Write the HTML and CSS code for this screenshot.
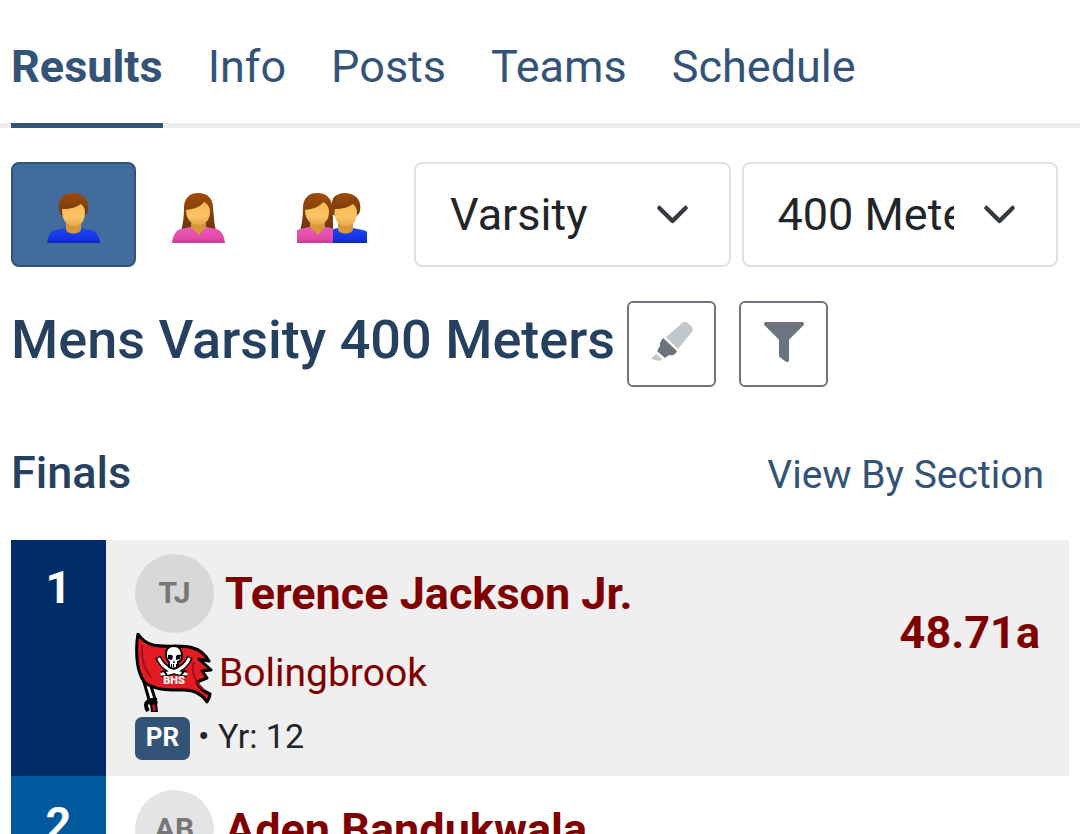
FILE: index.html
```
<!DOCTYPE html>
<html lang="en">
<head>
  <meta charset="UTF-8">
  <meta name="viewport" content="width=device-width, initial-scale=1.0">
  <title>Mens Varsity 400 Meters - Results</title>
  <link rel="stylesheet" href="styles.css">
</head>
<body>

  <!-- Shared drawings -->
  <svg class="defs" width="0" height="0" aria-hidden="true">
    <defs>
      <linearGradient id="skin" x1="0" y1="0" x2="0" y2="1">
        <stop offset="0" stop-color="#f6b84e" />
        <stop offset="0.6" stop-color="#fbc566" />
        <stop offset="1" stop-color="#e5a94a" />
      </linearGradient>
      <linearGradient id="hair" x1="0" y1="0" x2="0" y2="1">
        <stop offset="0" stop-color="#a04c08" />
        <stop offset="1" stop-color="#6b3410" />
      </linearGradient>
      <linearGradient id="blue" x1="0" y1="0" x2="0" y2="1">
        <stop offset="0" stop-color="#2147ee" />
        <stop offset="0.7" stop-color="#1233e8" />
        <stop offset="1" stop-color="#0b25b8" />
      </linearGradient>
      <linearGradient id="pink" x1="0" y1="0" x2="0" y2="1">
        <stop offset="0" stop-color="#ea5bb5" />
        <stop offset="0.7" stop-color="#e04ba8" />
        <stop offset="1" stop-color="#c03c8e" />
      </linearGradient>
      <symbol id="man" viewBox="0 0 53 50">
        <path fill="url(#blue)" d="M0 50c1-8 4-12 9-13l10-2h15l10 2c5 1 8 5 9 13z" />
        <path fill="#d8973a" d="M19 30h15v6c0 6-15 6-15 0z" />
        <path fill="url(#hair)" d="M12 17C10 7 16 0 26 0s17 7 15 17c0 3-2 5-4 6H16c-2-1-4-3-4-6z" />
        <path fill="url(#skin)" d="M15 16c9 0 15-2 19-5 2 2 4 4 4 8 0 9-4 14-11 14S15 28 15 16z" />
      </symbol>
      <symbol id="woman" viewBox="0 0 53 50">
        <path fill="url(#hair)" d="M26 0C17 0 12 6 12 15c0 8-1 16-3 23h35c-2-7-2-15-3-23C41 6 36 0 26 0z" />
        <path fill="url(#pink)" d="M0 50c1-8 4-13 9-14l9-2h17l9 2c5 1 8 6 9 14z" />
        <path fill="#d8973a" d="M19 30h15v4l-7 8-8-8z" />
        <path fill="url(#skin)" d="M14 17c9-1 14-3 18-8 4 2 6 5 6 10 0 8-5 13-11 13S14 28 14 17z" />
      </symbol>
    </defs>
  </svg>

  <!-- Meet tabs -->
  <nav class="tabs">
    <a class="tab active" href="#results">Results</a>
    <a class="tab" href="#info">Info</a>
    <a class="tab" href="#posts">Posts</a>
    <a class="tab" href="#teams">Teams</a>
    <a class="tab" href="#schedule">Schedule</a>
  </nav>

  <main id="results">
    <!-- Gender, division and event filters -->
    <div class="filters">
      <div class="genders">
        <button class="gender selected" type="button" aria-label="Mens">
          <svg width="53" height="50"><use href="#man" /></svg>
        </button>
        <button class="gender" type="button" aria-label="Womens">
          <svg width="53" height="50"><use href="#woman" /></svg>
        </button>
        <button class="gender wide" type="button" aria-label="Both">
          <svg width="70" height="50" viewBox="0 0 70 50">
            <svg width="36" height="50" viewBox="6 0 36 50"><use href="#woman" width="53" height="50" /></svg>
            <svg x="36" width="34" height="50" viewBox="14 0 34 50"><use href="#man" width="53" height="50" /></svg>
            <path fill="#8a420e" d="M34 22c-1-10 1-17 6-20l-3 20z" />
          </svg>
        </button>
      </div>
      <div class="select-box">
        <select aria-label="Division">
          <option>Varsity</option>
          <option>Junior Varsity</option>
        </select>
        <svg class="chevron" viewBox="0 0 16 16"><path d="m2 5 6 6 6-6" /></svg>
      </div>
      <div class="select-box">
        <select aria-label="Event">
          <option>400 Meters</option>
          <option>800 Meters</option>
        </select>
        <svg class="chevron" viewBox="0 0 16 16"><path d="m2 5 6 6 6-6" /></svg>
      </div>
    </div>

    <div class="event-header">
      <h1>Mens Varsity 400 Meters</h1>
      <button class="tool" type="button" aria-label="Highlight">
        <svg width="42" height="40" viewBox="0 0 42 40">
          <path fill="#c3c7ca" d="M15 15 30 2q4-4 7-1l4 4q2 3-1 6L27 27z" />
          <path fill="#6c757d" d="m12 16 14 13-2 3q-2 2-6 1l-4 3-8-7 3-5q-1-3 1-5z" />
          <path fill="#c3c7ca" d="m5 32 6 5-2 2-9-2z" />
        </svg>
      </button>
      <button class="tool" type="button" aria-label="Filter">
        <svg width="40" height="40" viewBox="0 0 512 512">
          <path fill="#6c757d" d="M488 0H24C3 0-8 26 7 41l185 185v206c0 8 4 15 10 20l80 56c16 11 38 0 38-20V226L505 41c15-15 4-41-17-41z" />
        </svg>
      </button>
    </div>

    <div class="round-header">
      <h2>Finals</h2>
      <a href="#sections">View By Section</a>
    </div>

    <table class="results">
      <tbody>
        <tr>
          <td class="place first">1</td>
          <td class="athlete">
            <div class="name-line">
              <span class="avatar">TJ</span>
              <a class="name" href="#athlete-1">Terence Jackson Jr.</a>
            </div>
            <div class="team-line">
              <svg class="team-logo" width="79" height="79" viewBox="0 0 79 79" aria-hidden="true">
                <path fill="#fff" stroke="#000" stroke-width="3" d="m9 49 6 21 6-1-6-19z" />
                <path fill="none" stroke="#000" stroke-width="4" d="M22 67q-10-1-11 5 0 3 2 6" />
                <path fill="#c4122f" stroke="#000" stroke-width="2" d="m16 71 5-1 1 9h-5z" />
                <path fill="#e31b23" stroke="#000" stroke-width="3" stroke-linejoin="round" d="M3 1c4 6 8 9 15 11 14 3 27-1 40 3 8 2 12 6 16 13l-10-2 12 11-9 1 5 7-10 4c2 7 8 10 13 12 0 2-1 5-3 8-5-8-12-12-23-12-14 0-26 1-39-7C2 40 1 22 2 8z" />
                <path fill="none" stroke="#9d1020" stroke-width="2" d="M7 12c-1 13 3 25 9 33M59 29c-3 10 0 19 10 28" />
                <path fill="none" stroke="#000" stroke-width="6" d="M23 24q6 15 29 17M55 24q-6 15-29 17" />
                <path fill="none" stroke="#fff" stroke-width="3" stroke-linecap="round" d="M24 26q6 13 27 15M54 26q-6 13-27 15" />
                <path fill="none" stroke="#000" stroke-width="2" d="m28 37 4 5M50 37l-4 5" />
                <path fill="#fff" stroke="#000" stroke-width="2" d="M39 13c-6 0-9 4-8 10 0 3 1 4 3 6v5q5 3 9 0v-5c3-1 4-3 4-6 0-6-3-10-8-10z" />
                <path d="M33 22q3-1 5 1l-1 4-4-1zM41 23q2-2 5-1l-1 4-4 1zM39 27l1 3h-2zM36 31h1v3h-1zM38 31h1v3h-1zM41 31h1v3h-1z" />
                <text x="39" y="51" text-anchor="middle">BHS</text>
              </svg>
              <a class="team" href="#team-1">Bolingbrook</a>
            </div>
            <div class="details">
              <span class="badge">PR</span>
              <span>• Yr: 12</span>
            </div>
          </td>
          <td class="mark">48.71a</td>
        </tr>
        <tr>
          <td class="place second">2</td>
          <td class="athlete">
            <div class="name-line">
              <span class="avatar">AB</span>
              <a class="name" href="#athlete-2">Aden Bandukwala</a>
            </div>
          </td>
          <td class="mark"></td>
        </tr>
      </tbody>
    </table>
  </main>

</body>
</html>
```
FILE: styles.css
```
* {
  box-sizing: border-box;
}

body {
  margin: 0;
  font-family: Roboto, "Liberation Sans", sans-serif;
  color: #212529;
  background: #fff;
}

a {
  text-decoration: none;
  color: #335478;
}

.defs {
  position: absolute;
}

/* Tabs */
.tabs {
  display: flex;
  gap: 45px;
  padding: 33px 11px 0;
  font-size: 45px;
  line-height: 68px;
  box-shadow: inset 0 -5px #ececec;
}

.tab {
  padding-bottom: 22px;
  border-bottom: 5px solid transparent;
}

.tab.active {
  font-weight: bold;
  border-color: #335478;
}

main {
  padding: 34px 11px 0;
}

/* Filters */
.filters {
  display: flex;
  gap: 11px;
  padding-right: 11px;
}

.genders {
  display: flex;
  margin-right: 11px;
}

.gender {
  display: flex;
  align-items: center;
  justify-content: center;
  width: 125px;
  height: 105px;
  padding: 6px 0 0;
  border: 2px solid transparent;
  border-radius: 8px;
  background: none;
}

.gender.wide {
  width: 131px;
  padding-left: 11px;
}

.gender.selected {
  background: #416c9c;
  border-color: #335478;
}

.select-box {
  position: relative;
  flex: 1 1 0;
  min-width: 0;
}

.select-box select {
  appearance: none;
  width: 100%;
  height: 105px;
  padding: 0 102px 0 34px;
  border: 2px solid #dee2e6;
  border-radius: 8px;
  background: #fff;
  color: #212529;
  font-family: inherit;
  font-size: 45px;
}

.chevron {
  position: absolute;
  top: 35px;
  right: 41px;
  width: 35px;
  height: 35px;
  fill: none;
  stroke: #343a40;
  stroke-width: 2;
  stroke-linecap: round;
  stroke-linejoin: round;
  pointer-events: none;
}

/* Event title */
.event-header {
  display: flex;
  align-items: flex-start;
  margin-top: 34px;
}

h1, h2 {
  margin: 0;
  font-weight: 500;
  color: #26415f;
}

h1 {
  margin-right: 12px;
  font-size: 54px;
  line-height: 78px;
}

.tool {
  display: flex;
  justify-content: center;
  width: 89px;
  height: 86px;
  margin-right: 23px;
  padding: 19px 0 0;
  border: 2px solid #6c757d;
  border-radius: 6px;
  background: #fff;
}

.round-header {
  display: flex;
  align-items: flex-start;
  justify-content: space-between;
  margin-top: 60px;
  padding-right: 25px;
}

h2 {
  font-size: 45px;
  line-height: 52px;
}

.round-header a {
  font-size: 39px;
  line-height: 56px;
}

/* Results */
.results {
  width: 100%;
  margin-top: 37px;
  border-collapse: collapse;
}

.results tr {
  height: 236px;
}

.results tr:nth-child(odd) {
  background: #efefef;
}

.results td {
  padding: 0;
  vertical-align: top;
}

.results .place {
  width: 95px;
  padding-top: 20px;
  color: #fff;
  font-size: 45px;
  font-weight: bold;
  line-height: 56px;
  text-align: center;
}

.place.first {
  background: #002d69;
}

.place.second {
  background: #00589d;
}

.results .athlete {
  padding: 14px 0 0 29px;
}

.name-line {
  display: flex;
  align-items: center;
  gap: 11px;
}

.avatar {
  width: 79px;
  height: 79px;
  border-radius: 50%;
  background: #d8d8d8;
  color: #777;
  font-size: 30px;
  font-weight: bold;
  line-height: 77px;
  text-align: center;
}

tr:nth-child(even) .avatar {
  background: #e4e4e4;
}

.name {
  color: #800000;
  font-size: 45px;
  font-weight: bold;
}

.team-line {
  display: flex;
  align-items: center;
  gap: 5px;
}

.team-logo text {
  fill: #fff;
  font-size: 11px;
  font-weight: 900;
}

.team {
  color: #800000;
  font-size: 39px;
}

.details {
  display: flex;
  gap: 8px;
  margin-top: 5px;
  font-size: 34px;
  line-height: 38px;
}

.badge {
  width: 55px;
  height: 43px;
  border-radius: 7px;
  background: #335478;
  color: #fff;
  font-size: 26px;
  font-weight: bold;
  line-height: 41px;
  text-align: center;
}

.results .mark {
  padding: 65px 29px 0 0;
  color: #800000;
  font-size: 45px;
  font-weight: bold;
  line-height: 56px;
  text-align: right;
}
```
